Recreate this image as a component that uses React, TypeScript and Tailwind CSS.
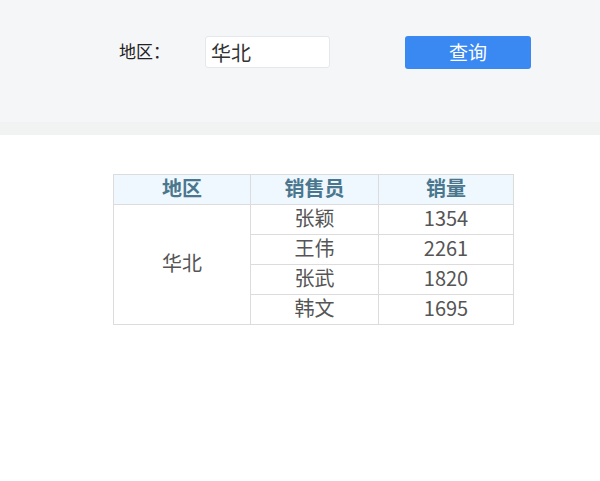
import React from "react";

const rows = [
  { name: "张颖", sales: 1354 },
  { name: "王伟", sales: 2261 },
  { name: "张武", sales: 1820 },
  { name: "韩文", sales: 1695 },
];

const cjk = { fontFamily: '"Noto Sans CJK SC", "Noto Sans", sans-serif' };

export default function App() {
  return (
    <div className="min-h-[481px] w-[600px] bg-white" style={cjk}>
      <div className="flex h-[122px] items-start bg-[#f5f6f8] pt-9">
        <label className="ml-[119px] mt-[3px] w-[86px] text-[17px] leading-6 text-[#222]">地区：</label>
        <input
          defaultValue="华北"
          className="h-[32px] w-[125px] rounded-[3px] border border-[#e4e7ec] bg-white px-[5px] text-[20px] text-[#333] outline-none"
        />
        <button className="ml-[75px] h-[33px] w-[126px] rounded-[3px] bg-[#3a88f1] text-[19px] text-white">
          查询
        </button>
      </div>
      <div className="h-[13px] bg-[#f1f2f2]" />
      <div className="flex justify-center pt-[39px]">
        <table className="ml-[27px] w-[401px] border-collapse text-[20px] text-[#555]">
          <thead>
            <tr className="h-[30px] bg-[#f0f8ff] text-[#4a778e]">
              <th className="w-[137px] border border-[#dcdcdc] pb-[3px] font-bold leading-none">地区</th>
              <th className="w-[128px] border border-[#dcdcdc] pb-[3px] font-bold leading-none">销售员</th>
              <th className="border border-[#dcdcdc] pb-[3px] font-bold leading-none">销量</th>
            </tr>
          </thead>
          <tbody>
            {rows.map((r, i) => (
              <tr key={r.name} className="h-[30px] text-center">
                {i === 0 && (
                  <td rowSpan={4} className="border border-[#dcdcdc] pb-[3px] leading-none">华北</td>
                )}
                <td className="border border-[#dcdcdc] pb-[3px] leading-none">{r.name}</td>
                <td className="border border-[#dcdcdc] pb-[3px] leading-none">{r.sales}</td>
              </tr>
            ))}
          </tbody>
        </table>
      </div>
    </div>
  );
}
